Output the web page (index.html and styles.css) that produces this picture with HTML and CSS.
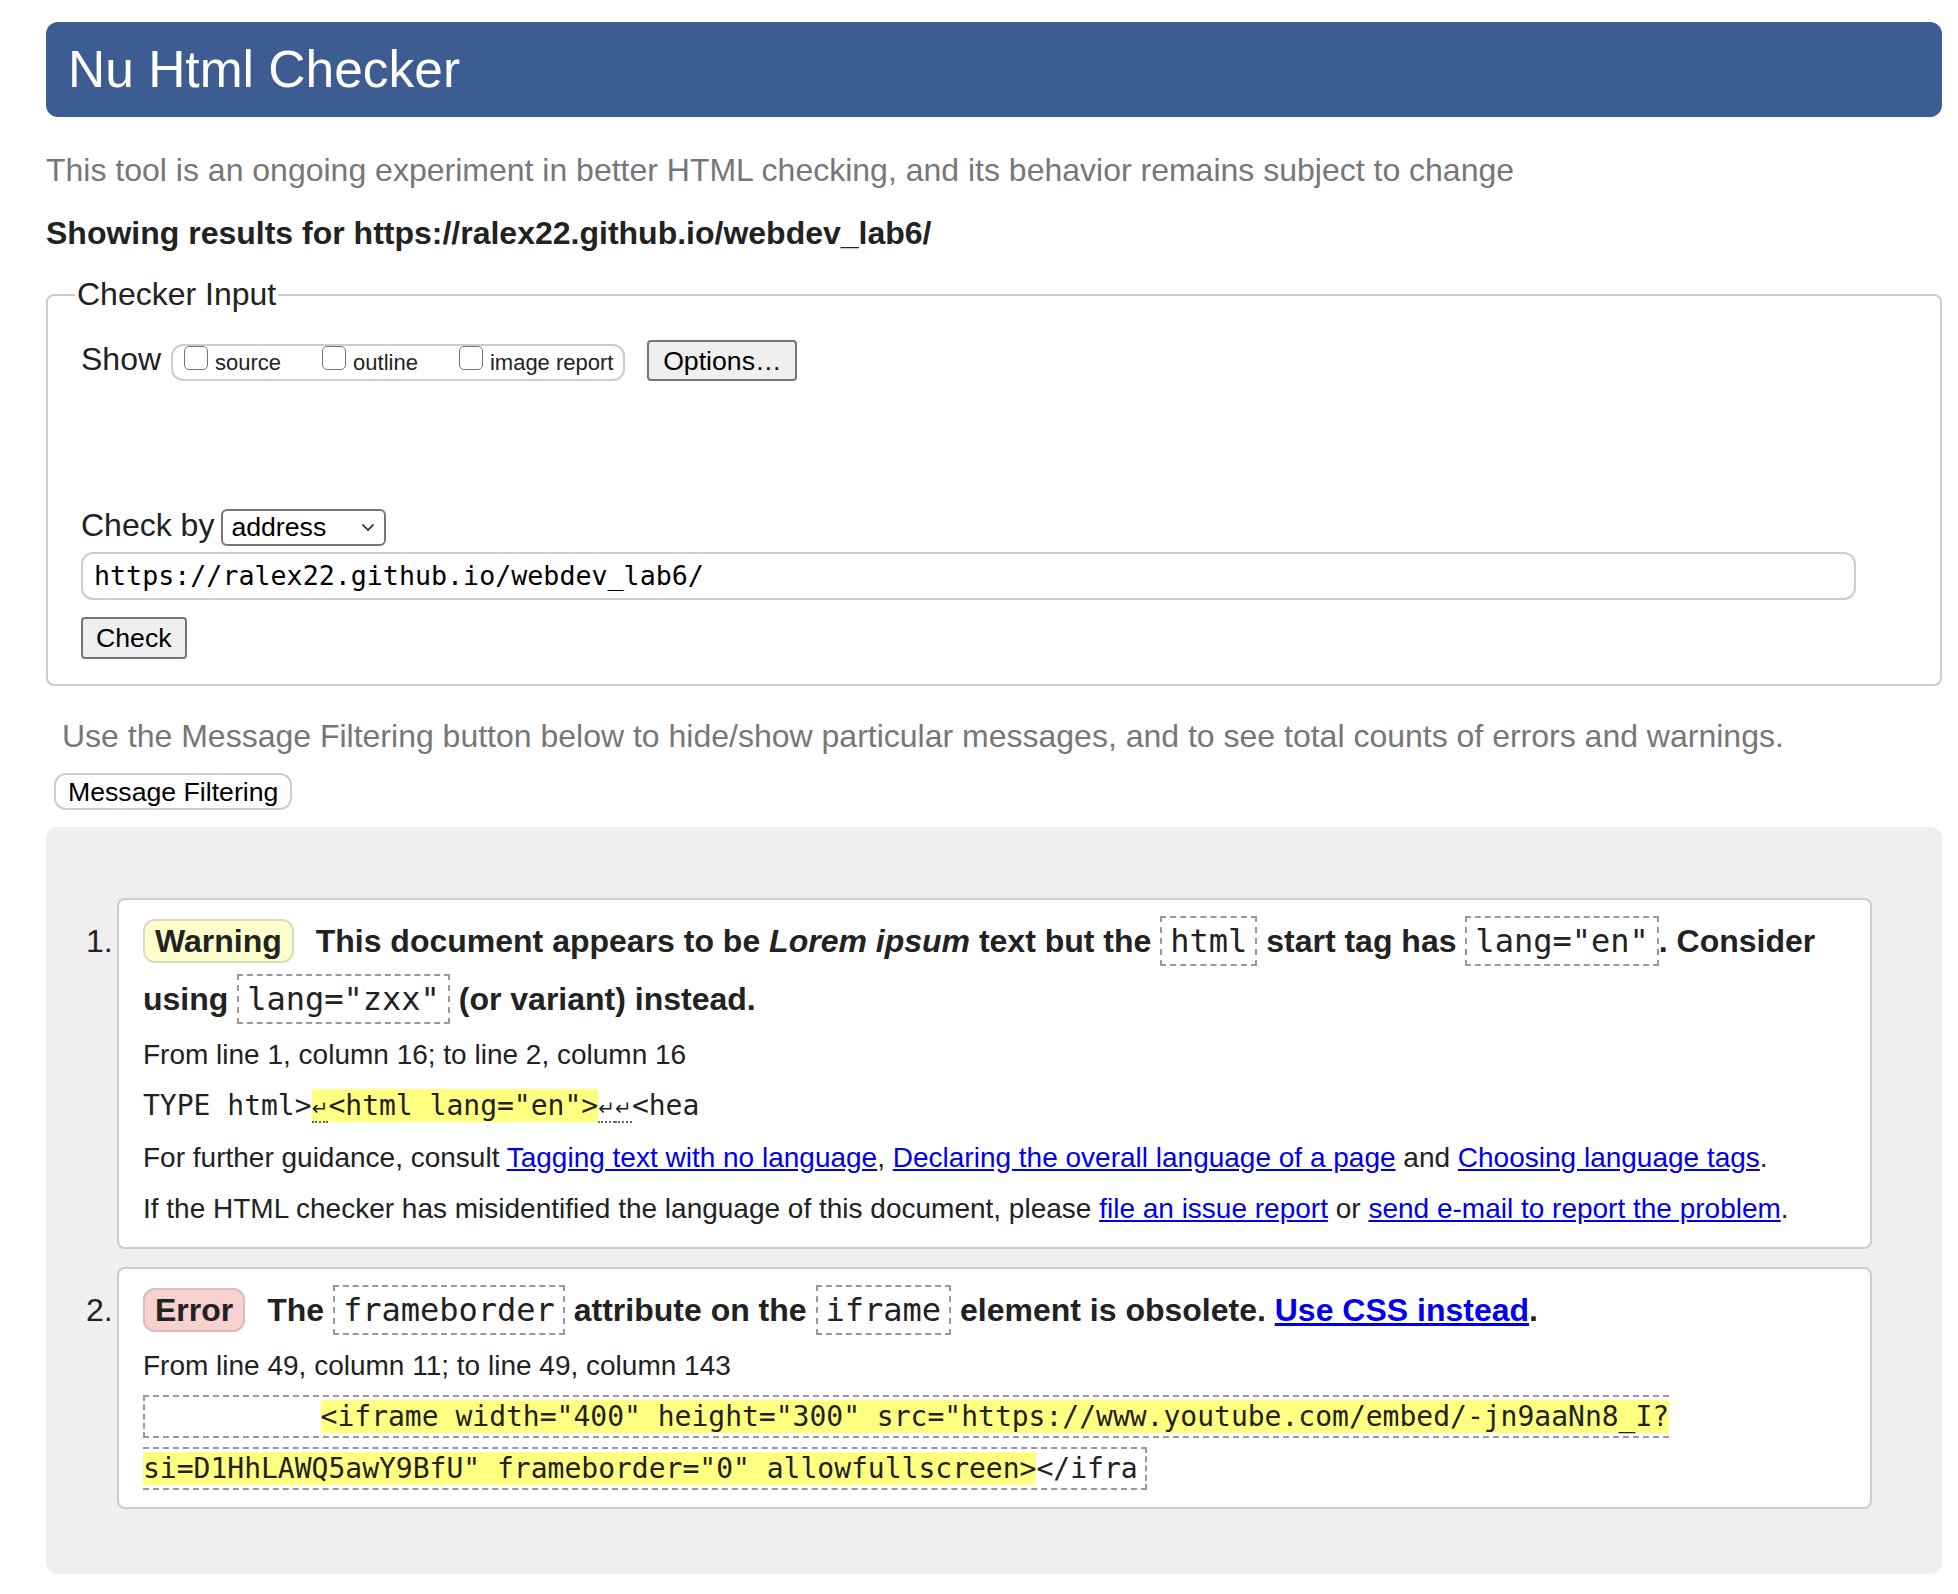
FILE: index.html
```html
<!DOCTYPE html>
<html lang="en">
<head>
<meta charset="utf-8">
<title>Nu Html Checker</title>
<link rel="stylesheet" href="styles.css">
</head>
<body>
<h1 class="banner">Nu Html Checker</h1>
<p class="tagline">This tool is an ongoing experiment in better HTML checking, and its behavior remains subject to change</p>
<p class="showing">Showing results for https://ralex22.github.io/webdev_lab6/</p>

<fieldset class="input-box">
  <legend class="legend">Checker Input</legend>
  <div class="show-row">
    <span class="row-label">Show</span>
    <div class="opts"><span class="cb"></span><span class="opt-lbl">source</span><span class="cb"></span><span class="opt-lbl">outline</span><span class="cb"></span><span class="opt-lbl last">image report</span></div>
    <button class="btn opt-btn">Options…</button>
  </div>
  <div class="by-row">
    <span class="row-label">Check by</span>
    <span class="select">address<svg class="chev" width="14" height="9" viewBox="0 0 14 9"><path d="M1.5 1.5 L7 7 L12.5 1.5" fill="none" stroke="#222" stroke-width="1.6"/></svg></span>
  </div>
  <div class="url">https://ralex22.github.io/webdev_lab6/</div>
  <button class="btn check-btn">Check</button>
</fieldset>

<p class="filter-note">Use the Message Filtering button below to hide/show particular messages, and to see total counts of errors and warnings.</p>
<button class="filter-btn">Message Filtering</button>

<div class="results">
  <ol class="msgs">
    <li class="item">
      <span class="num">1.</span>
      <div class="msg">
        <p class="msg-title"><strong class="badge warn">Warning</strong> This document appears to be <em>Lorem ipsum</em> text but the <code class="c">html</code> start tag has <code class="c">lang="en"</code>. Consider using <code class="c">lang="zxx"</code> (or variant) instead.</p>
        <p class="info">From line 1, column 16; to line 2, column 16</p>
        <p class="info"><code class="x">TYPE html&gt;<mark><span class="lf">↵</span>&lt;html lang="en"&gt;</mark><span class="lf">↵</span><span class="lf">↵</span>&lt;hea</code></p>
        <p class="info">For further guidance, consult <a href="#">Tagging text with no language</a>, <a href="#">Declaring the overall language of a page</a> and <a href="#">Choosing language tags</a>.</p>
        <p class="info">If the HTML checker has misidentified the language of this document, please <a href="#">file an issue report</a> or <a href="#">send e-mail to report the problem</a>.</p>
      </div>
    </li>
    <li class="item">
      <span class="num">2.</span>
      <div class="msg">
        <p class="msg-title"><strong class="badge err">Error</strong> The <code class="c">frameborder</code> attribute on the <code class="c">iframe</code> element is obsolete. <a href="#">Use CSS instead</a>.</p>
        <p class="info">From line 49, column 11; to line 49, column 143</p>
        <p class="info"><code class="x boxed">          <mark>&lt;iframe width="400" height="300" src="https://www.youtube.com/embed/-jn9aaNn8_I?<br>si=D1HhLAWQ5awY9BfU" frameborder="0" allowfullscreen&gt;</mark>&lt;/ifra</code></p>
      </div>
    </li>
  </ol>
</div>
</body>
</html>
```
FILE: styles.css
```css
html { background: #fff; }
body {
  margin: 0;
  padding: 22px 16px 21px 46px;
  font-family: "Liberation Sans", Arial, Helvetica, sans-serif;
  font-size: 32px;
  color: #222;
}
.banner {
  margin: 0;
  padding: 19px 24px 19px 22px;
  font-size: 51.5px;
  line-height: 57px;
  font-weight: normal;
  background: #3d5c91;
  color: #fff;
  border-radius: 12px;
}
.tagline {
  margin: 35px 0 0;
  line-height: 37px;
  color: #777;
}
.showing {
  margin: 26px 0 0;
  line-height: 37px;
  font-weight: bold;
}
.input-box {
  margin: 24px 0 0;
  border: 2px solid #ccc;
  border-radius: 8px;
  padding: 0 32px 25px 33px;
  min-width: 0;
}
.legend {
  padding: 0 2px 1px;
  margin-left: -6px;
  line-height: 37px;
  font-size: 32px;
  color: #222;
}
.show-row {
  margin-top: 26px;
  display: flex;
  align-items: baseline;
}
.row-label {
  line-height: 37px;
}
.opts {
  margin-left: 10px;
  border: 2px solid #ccc;
  border-radius: 12px;
  padding: 0 10px 0 11px;
  font-size: 22px;
  line-height: 33px;
  white-space: nowrap;
}
.cb {
  display: inline-block;
  width: 24px;
  height: 24px;
  box-sizing: border-box;
  border: 1.5px solid #767676;
  border-radius: 5px;
  background: #fff;
  vertical-align: baseline;
}
.opt-lbl {
  margin-left: 7px;
  margin-right: 41px;
}
.opt-lbl.last { margin-right: 0; }
.btn {
  font-family: "Liberation Sans", Arial, Helvetica, sans-serif;
  font-size: 26.67px;
  line-height: 30px;
  color: #000;
  background: #efefef;
  border: 2px solid #767676;
  border-radius: 4px;
}
.opt-btn {
  margin-left: 22px;
  padding: 3.5px 13.7px;
}
.by-row {
  margin-top: 126px;
  display: flex;
  align-items: baseline;
  gap: 7px;
}
.select {
  display: inline-flex;
  align-items: center;
  justify-content: space-between;
  box-sizing: border-box;
  width: 165px;
  height: 37px;
  padding: 0 9px 0 8px;
  border: 2px solid #767676;
  border-radius: 6px;
  background: #fff;
  font-size: 26.67px;
  color: #000;
}
.chev { display: block; }
.url {
  margin: 6px 52px 0 0;
  border: 2px solid #ccc;
  border-radius: 12px;
  padding: 0 11px;
  line-height: 44px;
  font-family: "DejaVu Sans Mono", "Liberation Mono", monospace;
  font-size: 26.67px;
  color: #000;
}
.check-btn {
  display: block;
  margin-top: 17px;
  padding: 4px 13px;
}
.filter-note {
  margin: 32px 0 0 16px;
  line-height: 37px;
  color: #777;
}
.filter-btn {
  display: block;
  margin: 18px 0 0 8px;
  padding: 1.5px 12px;
  font-family: "Liberation Sans", Arial, Helvetica, sans-serif;
  font-size: 26.67px;
  line-height: 30px;
  color: #000;
  background: #fff;
  border: 2px solid #ccc;
  border-radius: 12px;
}
.results {
  margin-top: 17px;
  background: #efefef;
  border-radius: 12px;
  padding: 71px 70px 65px 40px;
}
.msgs {
  margin: 0;
  padding: 0;
  list-style: none;
  display: flex;
  flex-direction: column;
  gap: 18px;
}
.item {
  display: flex;
  align-items: baseline;
}
.num {
  flex: none;
  width: 31px;
}
.msg {
  flex: 1;
  min-width: 0;
  background: #fff;
  border: 2px solid #ccc;
  border-radius: 8px;
  padding: 13.4px 24px 12.4px;
}
.msg p { margin: 0; }
.msg-title {
  font-weight: bold;
  line-height: 57.6px;
}
.badge {
  padding: 2px 10px;
  border: 2px solid #ccc;
  border-radius: 12px;
  margin-right: 13px;
}
.badge.warn { background: #ffffcc; border-color: #d9d9c4; }
.badge.err { background: #f7d0d0; border-color: #dbbcbc; }
.c {
  font-family: "DejaVu Sans Mono", "Liberation Mono", monospace;
  font-weight: normal;
  font-size: 32px;
  border: 2px dashed #999;
  padding: 4px 8px;
}
.info {
  font-size: 28px;
  line-height: 51.5px;
}
.x {
  font-family: "DejaVu Sans Mono", "Liberation Mono", monospace;
  font-size: 28px;
  white-space: pre;
}
.x mark {
  background: #ffff80;
  color: inherit;
}
.boxed {
  border: 2px dashed #999;
  padding: 3px 7px;
}
.lf {
  display: inline-block;
  width: 16.86px;
  font-family: "DejaVu Sans", sans-serif;
  font-size: 20px;
  line-height: 1;
  text-align: center;
  padding-bottom: 3px;
  border-bottom: 2px dotted #666;
}
a { color: #0000ee; text-decoration: underline; }
```
